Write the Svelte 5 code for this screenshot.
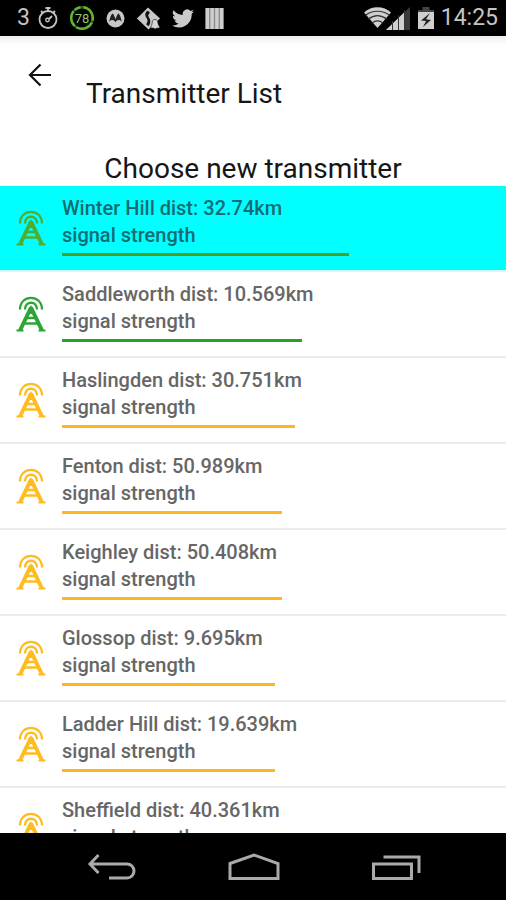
<script>
  const transmitters = [
    { name: 'Winter Hill', dist: '32.74km', strength: 67, color: '#4caf32', bar: '#4c9f1c', selected: true },
    { name: 'Saddleworth', dist: '10.569km', strength: 56, color: '#2ba535', bar: '#22a526' },
    { name: 'Haslingden', dist: '30.751km', strength: 54.4, color: '#ffbc20', bar: '#ffb71c' },
    { name: 'Fenton', dist: '50.989km', strength: 51.4, color: '#ffbc20', bar: '#ffb71c' },
    { name: 'Keighley', dist: '50.408km', strength: 51.4, color: '#ffbc20', bar: '#ffb71c' },
    { name: 'Glossop', dist: '9.695km', strength: 49.7, color: '#ffbc20', bar: '#ffb71c' },
    { name: 'Ladder Hill', dist: '19.639km', strength: 49.7, color: '#ffbc20', bar: '#ffb71c' },
    { name: 'Sheffield', dist: '40.361km', strength: 49, color: '#ffbc20', bar: '#ffb71c' }
  ];
</script>

<div class="screen">
  <div class="status">
    <div class="notifications">
      <span>3</span>
      <svg class="timer" width="20" height="24" viewBox="0 0 20 24" fill="none" stroke="#c4c4c4" stroke-width="1.8">
        <circle cx="10" cy="13.500" r="8.500" />
        <path d="M7.500 2h5M10 2v3M3 5l2 2M17 5l-2 2M11 13l3-3" />
        <circle cx="9.500" cy="14" r="1.700" stroke-width="1.400" />
      </svg>
      <svg class="gauge" width="26" height="26" viewBox="0 0 26 26">
        <circle cx="13" cy="13" r="10.800" fill="none" stroke="#2c5a18" stroke-width="2.400" />
        <path d="M14.500 2.300A10.800 10.800 0 1 1 4.500 6.300M5.800 4.900A10.800 10.800 0 0 1 11.500 2.300" fill="none" stroke="#62b52f" stroke-width="2.400" stroke-dasharray="18 2" />
        <text x="13" y="17.500" text-anchor="middle" font-size="13" fill="#86c860">78</text>
      </svg>
      <svg class="moto" width="19" height="19" viewBox="0 0 19 19">
        <circle cx="9.500" cy="9.500" r="9" fill="#c8c8c8" />
        <path d="M3.300 13C4 8.500 5.300 5 6.700 4.500c1.200 1 2 3.500 2.800 5.700.8-2.200 1.600-4.700 2.800-5.700 1.400.5 2.700 4 3.400 8.500-.8-1.400-1.800-2-3-2-1.300 0-2.400.8-3.200 2.300C8.700 11.800 7.600 11 6.300 11c-1.200 0-2.200.6-3 2z" fill="#222" />
      </svg>
      <svg class="call" width="25" height="25" viewBox="0 0 26 26">
        <path d="M12.500 1.500L25 13 13 24.500 1 13z" fill="#c8c8c8" />
        <path d="M12.500 5c-3.500 1.500-3.500 4.500-1.500 7.500 1.500 2 1.300 4.500-.5 6.500l2.500 2c2.500-3 2.500-6.500.3-9.500-.8-1.200-.8-2 0-3l1.200-1.500z" fill="#111" />
        <path d="M15.500 21.500c1.500-1.500 1-5 2-6.500 1-1.400 3.600-1.400 4.600 0 1 1.500.5 5 2.400 6.500v1.500h-3a1.800 1.800 0 0 1-3 0h-3z" fill="#d6d6d6" stroke="#222" stroke-width=".7" />
      </svg>
      <svg class="bird" width="22" height="19" viewBox="0 0 24 20" fill="#cbcbcb">
        <path d="M24 2.400a10 10 0 0 1-2.800.8A5 5 0 0 0 23.300.5a10 10 0 0 1-3.100 1.200 4.900 4.900 0 0 0-8.400 4.500A14 14 0 0 1 1.700 1a4.900 4.900 0 0 0 1.500 6.600 5 5 0 0 1-2.200-.6 4.900 4.900 0 0 0 4 4.900 5 5 0 0 1-2.300.1 4.900 4.900 0 0 0 4.600 3.400A10 10 0 0 1 0 17.500 14 14 0 0 0 21.500 5z" />
      </svg>
      <svg class="barcode" width="19" height="21" viewBox="0 0 19 22">
        <path d="M0 0h19v22H0z" fill="#888" />
        <path d="M2 0v22M7 0v22M12 0v22M17 0v22" stroke="#cecece" stroke-width="3.600" />
      </svg>
    </div>
    <div class="system">
      <svg width="47" height="24" viewBox="0 0 47 24">
        <path d="M0 6.500a20 20 0 0 1 27 0L13.500 22z" fill="#cfcfcf" />
        <path d="M1.500 9.300c7-5.400 17-5.400 24 0M4 13.300c6-4.600 13-4.600 19 0M8 17c3.500-2.700 7.500-2.700 11 0" fill="none" stroke="#333" stroke-width="1.100" />
        <path d="M22 24L46 1v23z" fill="#3b3b3b" />
        <path d="M22 24L40 6.500V24z" fill="#cfcfcf" />
        <path d="M28.500 15v9M34.500 9v15M40.500 4v20" stroke="#333" stroke-width="1" />
      </svg>
      <svg width="16" height="24" viewBox="0 0 16 24">
        <path d="M4.500 1h7v3H16v7H0V4h4.500z" fill="#444" />
        <path d="M0 6h16v17H0z" fill="#cfcfcf" />
        <path d="M12 7l-9 7.500 5 .5-3 6 8-7-5-.8z" fill="#222" />
      </svg>
      <time>14:25</time>
    </div>
  </div>

  <header>
    <button class="back" aria-label="Back">
      <svg width="24" height="24" viewBox="0 0 24 24" fill="none" stroke="#111" stroke-width="2.200">
        <path d="M12.500 1.500L2 12l10.500 10.500M2 12h21" />
      </svg>
    </button>
    <h1>Transmitter List</h1>
  </header>

  <main>
    <h2>Choose new transmitter</h2>
    <ul>
      {#each transmitters as t}
        <li class:selected={t.selected}>
          <svg class="mast" width="30" height="36" viewBox="0 0 30 36" fill="none" stroke={t.color}>
            <path d="M4 13.500C4-2 26-2 26 13.500" stroke-width="2.300" />
            <path d="M9 13.500C9 4.500 21 4.500 21 13.500" stroke-width="2.300" />
            <path d="M15 11.500L4 34.500M15 11.500L26 34.500" stroke-width="4" />
            <path d="M.5 34.500h7M22.500 34.500h7" stroke-width="2" />
            <path d="M10 22h10M8 27.500h14" stroke-width="2.400" />
            <path d="M15 9l4.500 9h-9z" fill={t.color} stroke="none" />
          </svg>
          <div class="info">
            <p>{t.name} dist: {t.dist}</p>
            <p>signal strength</p>
            <div
              class="bar"
              role="meter"
              aria-label="signal strength"
              aria-valuemin="0"
              aria-valuemax="100"
              aria-valuenow={t.strength}
              style="width: {t.strength}%; background: {t.bar}"
            ></div>
          </div>
        </li>
      {/each}
    </ul>
  </main>

  <nav>
    <button aria-label="Back">
      <svg width="50" height="30" viewBox="0 0 50 30" fill="none" stroke="#aaa" stroke-width="3">
        <path d="M11.500 2L3 11l8.500 9M3 11h37a7 7 0 0 1 0 14H22" />
      </svg>
    </button>
    <button aria-label="Home">
      <svg width="54" height="30" viewBox="0 0 54 30" fill="none" stroke="#aaa" stroke-width="3">
        <path d="M3 10.500L27 2l24 8.500V25.500H3z" />
      </svg>
    </button>
    <button aria-label="Recent apps">
      <svg width="50" height="30" viewBox="0 0 50 30" fill="none" stroke="#aaa" stroke-width="3">
        <path d="M2.500 11h38v14.500h-38zM12.500 4H48v16" />
      </svg>
    </button>
  </nav>
</div>

<style>
  :global(body) {
    margin: 0;
    background: #fff;
  }
  .screen {
    display: flex;
    flex-direction: column;
    height: 100vh;
    overflow: hidden;
    font-family: Roboto, "Noto Sans", sans-serif;
    color: #161616;
  }
  svg {
    display: block;
    flex: none;
  }
  h1, h2, p, ul {
    margin: 0;
    padding: 0;
    font-weight: 400;
  }
  button {
    display: flex;
    align-items: center;
    justify-content: center;
    padding: 0;
    border: 0;
    background: none;
  }
  .status {
    flex: none;
    display: flex;
    justify-content: space-between;
    align-items: center;
    box-sizing: border-box;
    height: 36px;
    padding: 0 8px 0 17px;
    background: #000;
    color: #c4c4c4;
    font-size: 23px;
    line-height: 36px;
  }
  .notifications, .system {
    display: flex;
    align-items: center;
  }
  .notifications {
    gap: 11px;
  }
  .notifications span {
    margin-right: -3px;
  }
  .system {
    gap: 7px;
  }
  header {
    flex: none;
    display: flex;
    align-items: flex-start;
    gap: 22px;
    box-sizing: border-box;
    height: 115px;
    padding: 15px 16px 0;
    background: linear-gradient(#eee, #fafafa 6px, #fff 10px);
  }
  .back {
    width: 48px;
    height: 48px;
  }
  h1, h2 {
    font-size: 28px;
    line-height: 35px;
  }
  h1 {
    margin-top: 25px;
  }
  main {
    flex: 1;
    min-height: 0;
    overflow: hidden;
  }
  h2 {
    text-align: center;
  }
  ul {
    list-style: none;
  }
  li {
    display: flex;
    align-items: flex-start;
    gap: 16px;
    box-sizing: border-box;
    height: 86px;
    padding: 9px 16px 0;
    border-bottom: 2px solid #ebebeb;
    color: #666;
  }
  .selected {
    background: #0ff;
    border-bottom-color: #d4ffff;
    color: #136c74;
  }
  .mast {
    margin-top: 15px;
  }
  .info {
    flex: 1;
  }
  p {
    font-size: 20px;
    font-weight: 500;
    line-height: 27px;
  }
  .bar {
    height: 3px;
    margin-top: 4px;
  }
  nav {
    flex: none;
    display: flex;
    justify-content: center;
    gap: 62px;
    height: 67px;
    padding-left: 2px;
    background: #000;
  }
  nav button {
    width: 80px;
    height: 70px;
  }
</style>
